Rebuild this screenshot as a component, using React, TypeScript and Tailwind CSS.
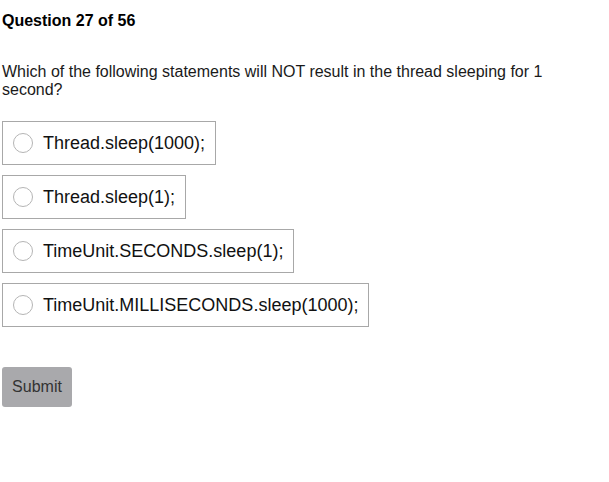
const options = [
  "Thread.sleep(1000);",
  "Thread.sleep(1);",
  "TimeUnit.SECONDS.sleep(1);",
  "TimeUnit.MILLISECONDS.sleep(1000);",
]

export default function App() {
  return (
    <div className="min-h-[482px] bg-white px-[2px] text-[#111] [font-family:'Liberation_Sans',Arial,sans-serif]">
      <h1 className="pt-[12px] text-[16px] font-bold leading-[18px] text-black">Question 27 of 56</h1>
      <p className="mt-[33px] text-[16px] leading-[18px] text-[#1a1a1a]">
        Which of the following statements will NOT result in the thread sleeping for 1 second?
      </p>
      <div className="mt-[22px] flex flex-col items-start gap-[10px]">
        {options.map((opt) => (
          <label
            key={opt}
            className="flex h-[44px] items-center gap-[10px] border border-[#a8a8a8] pl-[10px] pr-[10px]"
          >
            <span className="h-[20px] w-[20px] rounded-full border border-[#b5b5b5] bg-white" />
            <span className="text-[18px] leading-[21px] text-[#111]">{opt}</span>
          </label>
        ))}
      </div>
      <button className="mt-[40px] h-[40px] w-[70px] rounded-[3px] bg-[#a9a9ac] text-[16px] text-[#333]">
        Submit
      </button>
    </div>
  )
}
